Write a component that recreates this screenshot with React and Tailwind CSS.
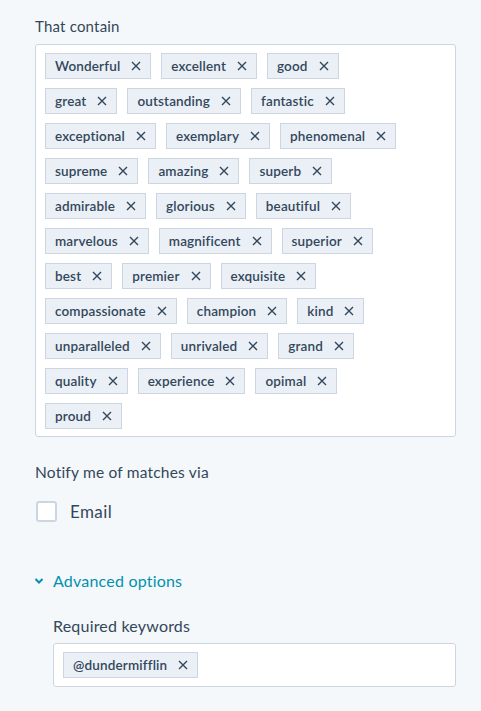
import React from "react";

const rows = [
  ["Wonderful", "excellent", "good"],
  ["great", "outstanding", "fantastic"],
  ["exceptional", "exemplary", "phenomenal"],
  ["supreme", "amazing", "superb"],
  ["admirable", "glorious", "beautiful"],
  ["marvelous", "magnificent", "superior"],
  ["best", "premier", "exquisite"],
  ["compassionate", "champion", "kind"],
  ["unparalleled", "unrivaled", "grand"],
  ["quality", "experience", "opimal"],
  ["proud"],
];

function CloseIcon() {
  return (
    <svg width="10" height="10" viewBox="0 0 10 10" className="shrink-0">
      <path d="M1 1 L9 9 M9 1 L1 9" stroke="#33475b" strokeWidth="1.4" fill="none" />
    </svg>
  );
}

function Tag({ label }) {
  return (
    <span className="flex items-center h-[26px] pl-[9px] pr-[9px] gap-[11px] bg-[#eaf0f6] border border-[#cbd6e2] text-[13.5px] tracking-[0.15px] font-semibold text-[#33475b]">
      {label}
      <CloseIcon />
    </span>
  );
}

export default function App() {
  return (
    <div
      className="min-h-[711px] w-[481px] bg-[#f5f8fa] pl-[35px] pr-[25px] pt-[16px] text-[#33475b]"
      style={{ fontFamily: "Lato, 'Open Sans', sans-serif" }}
    >
      <div className="text-[15px] tracking-[0.2px] leading-5 mb-[8px]">That contain</div>
      <div className="bg-white border border-[#cbd6e2] rounded-[3px] pl-[9px] pr-2 pt-[8px] pb-[7px] flex flex-col gap-[9px]">
        {rows.map((row, i) => (
          <div key={i} className="flex gap-[10px]">
            {row.map((w) => (
              <Tag key={w} label={w} />
            ))}
          </div>
        ))}
      </div>

      <div className="text-[15.5px] tracking-[0.2px] leading-5 mt-[25px]">Notify me of matches via</div>
      <label className="flex items-center gap-[13px] mt-[19px] pl-[1px]">
        <span className="w-[21px] h-[21px] rounded-[3px] border-2 border-[#cbd6e2] bg-white" />
        <span className="text-[17px] tracking-[0.4px] leading-5">Email</span>
      </label>

      <div className="flex items-center gap-[9px] mt-[49px] text-[#0091ae] text-[16px] tracking-[0.2px] leading-5">
        <svg width="10" height="8" viewBox="0 0 10 8" className="ml-[-1px]">
          <path d="M1.5 2 L5 5.5 L8.5 2" stroke="#0091ae" strokeWidth="2" fill="none" />
        </svg>
        <span>Advanced options</span>
      </div>

      <div className="pl-[18px] mt-[25px]">
        <div className="text-[16px] tracking-[0.2px] leading-5 mb-[7px]">Required keywords</div>
        <div className="bg-white border border-[#cbd6e2] rounded-[3px] pl-[9px] py-[8px] flex">
          <Tag label="@dundermifflin" />
        </div>
      </div>
    </div>
  );
}
